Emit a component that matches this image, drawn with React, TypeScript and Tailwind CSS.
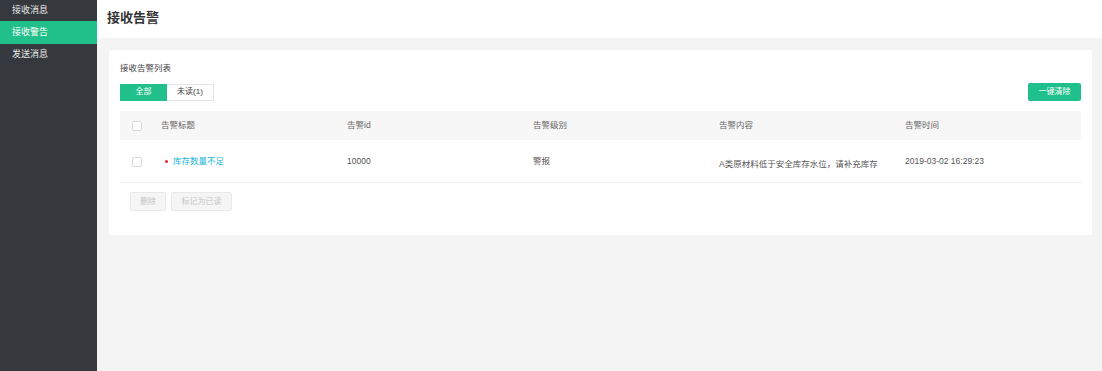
import { useState } from 'react';

type Alarm = {
  id: number;
  title: string;
  level: string;
  content: string;
  time: string;
  unread: boolean;
};

const alarms: Alarm[] = [
  { id: 10000, title: '库存数量不足', level: '警报', content: 'A类原材料低于安全库存水位，请补充库存', time: '2019-03-02 16:29:23', unread: true },
];

const menu = ['接收消息', '接收警告', '发送消息'];

function Checkbox() {
  return <span className="block h-[10px] w-[10px] rounded-[2px] border border-[#d9d9d9] bg-white" />;
}

export default function App() {
  const [tab, setTab] = useState<'all' | 'unread'>('all');
  const font = { fontFamily: '"Liberation Sans", "Noto Sans CJK SC", sans-serif' };

  return (
    <div className="flex h-[371px] w-[1102px] overflow-hidden bg-[#f4f4f4]" style={font}>
      <aside className="flex w-[97px] shrink-0 flex-col bg-[#35393e]">
        {menu.map((item, i) => (
          <div
            key={item}
            className={
              i === 1
                ? 'flex h-[23px] items-center bg-[#21bf89] pl-[12px] text-[9px] text-white'
                : 'flex h-[21px] items-center pl-[12px] text-[9px] text-[#e8e8e8]'
            }
          >
            {item}
          </div>
        ))}
      </aside>

      <main className="flex min-w-0 flex-1 flex-col">
        <header className="flex h-[38px] items-center bg-white pb-[2px] pl-[10px] text-[13px] font-bold text-[#333]">
          接收告警
        </header>

        <div className="pl-[12px] pr-[10px] pt-[12px]">
          <section className="rounded-[2px] bg-white px-[11px] pb-[24px] pt-[12px]">
            <p className="text-[8.5px] leading-[12px] text-[#444]">接收告警列表</p>

            <div className="mt-[9px] flex items-center justify-between">
              <div className="flex">
                <button
                  onClick={() => setTab('all')}
                  className={
                    tab === 'all'
                      ? 'h-[17px] w-[47px] border border-[#21bf89] bg-[#21bf89] text-[8px] text-white'
                      : 'h-[17px] w-[47px] border border-[#e4e4e4] bg-white text-[8px] text-[#444]'
                  }
                >
                  全部
                </button>
                <button
                  onClick={() => setTab('unread')}
                  className={
                    tab === 'unread'
                      ? 'h-[17px] w-[47px] border border-[#21bf89] bg-[#21bf89] text-[8px] text-white'
                      : 'h-[17px] w-[47px] border border-l-0 border-[#e4e4e4] bg-white text-[8px] text-[#444]'
                  }
                >
                  未读(1)
                </button>
              </div>
              <button className="h-[18px] w-[53px] rounded-[2px] bg-[#1fc08b] text-[8px] text-white">一键清除</button>
            </div>

            <div className="mt-[10px]">
              <div className="grid h-[29px] grid-cols-[41px_186px_186px_186px_186px_1fr] items-center bg-[#f7f7f7] text-[8.5px] text-[#666]">
                <div className="pl-[12px]">
                  <Checkbox />
                </div>
                <div>告警标题</div>
                <div>告警id</div>
                <div>告警级别</div>
                <div>告警内容</div>
                <div>告警时间</div>
              </div>
              {alarms
                .filter((a) => tab === 'all' || a.unread)
                .map((a) => (
                  <div
                    key={a.id}
                    className="grid h-[43px] grid-cols-[41px_186px_186px_186px_186px_1fr] items-center border-b border-[#ececec] text-[8.5px] text-[#555]"
                  >
                    <div className="pl-[12px] pt-[1px]">
                      <Checkbox />
                    </div>
                    <div className="flex items-center pl-[4px] text-[#1cb6d8]">
                      <span className="mr-[5px] h-[3px] w-[3px] rounded-full bg-[#f5222d]" />
                      {a.title}
                    </div>
                    <div>{a.id}</div>
                    <div>{a.level}</div>
                    <div className="pt-[6px]">{a.content}</div>
                    <div>{a.time}</div>
                  </div>
                ))}
            </div>

            <div className="mt-[9px] flex gap-[5px] pl-[10px]">
              <button className="h-[19px] w-[36px] rounded-[2px] border border-[#eaeaea] bg-[#f5f5f5] text-[8px] text-[#c4c4c4]">删除</button>
              <button className="h-[19px] w-[61px] rounded-[2px] border border-[#eaeaea] bg-[#f5f5f5] text-[8px] text-[#c4c4c4]">标记为已读</button>
            </div>
          </section>
        </div>
      </main>
    </div>
  );
}
